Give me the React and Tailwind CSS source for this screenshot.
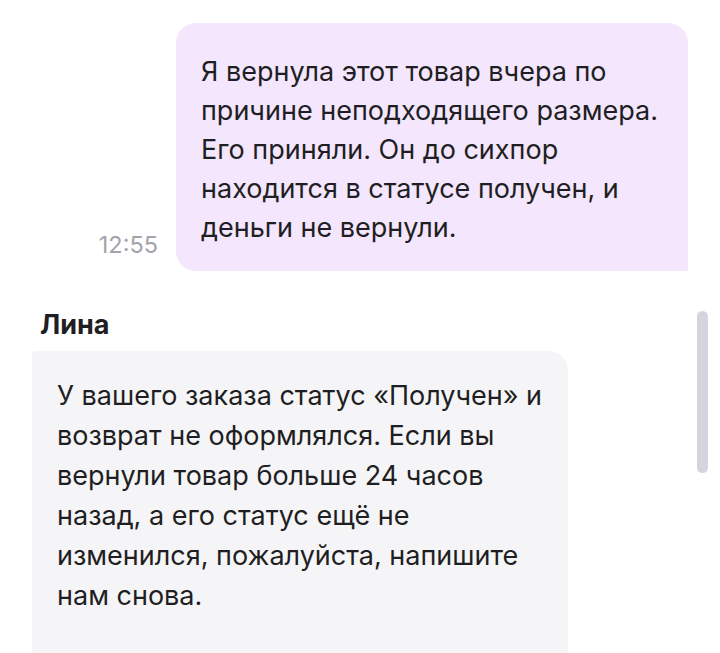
export default function App() {
  const font = { fontFamily: 'Inter, "Noto Sans", sans-serif' };
  return (
    <div className="relative w-[720px] h-[653px] overflow-hidden bg-white" style={font}>
      <div className="flex flex-col pt-[23px]">
        <div className="flex items-end justify-end pr-[32px]">
          <div className="mb-[13px] mr-[18px] text-[23.5px] leading-[26px] text-[#a3a3ab]">12:55</div>
          <div className="w-[512px] rounded-t-[20px] rounded-bl-[20px] bg-[#f3e6fd] pl-[25px] pr-[5px] pt-[29px] pb-[24px] text-[27px] leading-[39px] text-[#1f1f23]">
            Я вернула этот товар вчера по<br />
            причине неподходящего размера.<br />
            Его приняли. Он до сихпор<br />
            находится в статусе получен, и<br />
            деньги не вернули.
          </div>
        </div>
        <div className="mt-[40px] pl-[40px] text-[27px] leading-[28px] font-bold text-[#1f1f23]">Лина</div>
        <div className="mt-[12px] ml-[32px] w-[536px] h-[320px] rounded-tl-[4px] rounded-tr-[20px] bg-[#f5f5f7] pl-[25px] pr-[5px] pt-[25px] text-[27px] leading-[40px] text-[#1f1f23]">
          У вашего заказа статус «Получен» и<br />
          возврат не оформлялся. Если вы<br />
          вернули товар больше 24 часов<br />
          назад, а его статус ещё не<br />
          изменился, пожалуйста, напишите<br />
          нам снова.
        </div>
      </div>
      <div className="absolute left-[697px] top-[311px] w-[11px] h-[162px] rounded-full bg-[#d4d4de]" />
    </div>
  );
}
